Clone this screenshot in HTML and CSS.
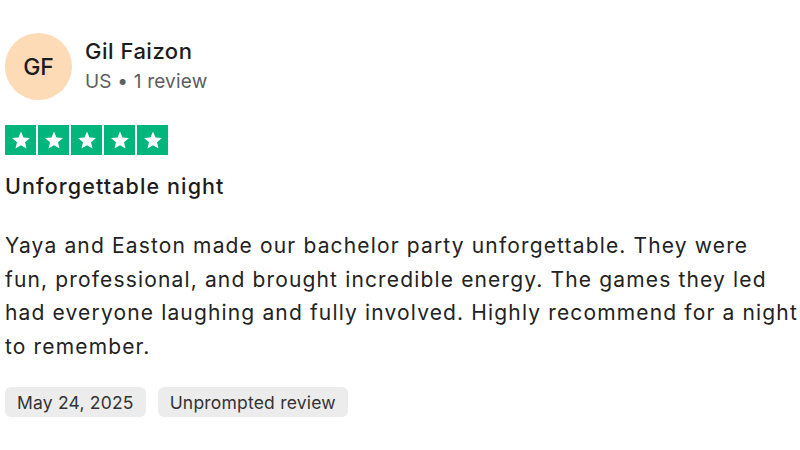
FILE: index.html
```html
<!DOCTYPE html>
<html>
<head>
<meta charset="utf-8">
<link rel="stylesheet" href="styles.css">
</head>
<body>
<div class="review">
  <div class="header">
    <div class="avatar">GF</div>
    <div class="who">
      <div class="name">Gil Faizon</div>
      <div class="meta">US • 1 review</div>
    </div>
  </div>
  <div class="stars">
    <span class="star"><svg viewBox="0 0 24 24"><path d="M12 3.5l2.47 6.06 6.53.48-5 4.22 1.56 6.36L12 17.16l-5.56 3.46L8 14.26 3 10.04l6.53-.48z" fill="#fff"/></svg></span>
    <span class="star"><svg viewBox="0 0 24 24"><path d="M12 3.5l2.47 6.06 6.53.48-5 4.22 1.56 6.36L12 17.16l-5.56 3.46L8 14.26 3 10.04l6.53-.48z" fill="#fff"/></svg></span>
    <span class="star"><svg viewBox="0 0 24 24"><path d="M12 3.5l2.47 6.06 6.53.48-5 4.22 1.56 6.36L12 17.16l-5.56 3.46L8 14.26 3 10.04l6.53-.48z" fill="#fff"/></svg></span>
    <span class="star"><svg viewBox="0 0 24 24"><path d="M12 3.5l2.47 6.06 6.53.48-5 4.22 1.56 6.36L12 17.16l-5.56 3.46L8 14.26 3 10.04l6.53-.48z" fill="#fff"/></svg></span>
    <span class="star"><svg viewBox="0 0 24 24"><path d="M12 3.5l2.47 6.06 6.53.48-5 4.22 1.56 6.36L12 17.16l-5.56 3.46L8 14.26 3 10.04l6.53-.48z" fill="#fff"/></svg></span>
  </div>
  <h2 class="title">Unforgettable night</h2>
  <p class="body">Yaya and Easton made our bachelor party unforgettable. They were<br>fun, professional, and brought incredible energy. The games they led had everyone laughing and fully involved. Highly recommend for a night to remember.</p>
  <div class="tags">
    <span class="tag">May 24, 2025</span>
    <span class="tag">Unprompted review</span>
  </div>
</div>
</body>
</html>
```
FILE: styles.css
```css
html, body {
  margin: 0;
  padding: 0;
  background: #ffffff;
}
body {
  font-family: Inter, "Noto Sans", sans-serif;
  color: #1c1c1c;
}
.review {
  padding: 33px 0 0 5px;
  width: 795px;
}
.header {
  display: flex;
  align-items: center;
  gap: 13px;
}
.avatar {
  width: 67px;
  height: 67px;
  border-radius: 50%;
  background: #fcdbb6;
  display: flex;
  align-items: center;
  justify-content: center;
  font-size: 23px;
  font-weight: 500;
  color: #1c1c1c;
}
.who {
  display: flex;
  flex-direction: column;
  gap: 7px;
  margin-top: -3px;
}
.name {
  font-size: 22px;
  font-weight: 500;
  line-height: 26px;
  letter-spacing: 0.5px;
}
.meta {
  font-size: 19px;
  line-height: 22px;
  color: #5e5e5e;
  letter-spacing: 0.2px;
}
.stars {
  display: flex;
  gap: 2px;
  margin-top: 25px;
}
.star {
  width: 31px;
  height: 30px;
  background: #00b67a;
  display: flex;
  align-items: center;
  justify-content: center;
}
.star svg {
  width: 24px;
  height: 24px;
}
.title {
  margin: 18px 0 0 0;
  font-size: 21.5px;
  font-weight: 500;
  line-height: 26px;
  letter-spacing: 1.1px;
}
.body {
  margin: 30px 0 0 0;
  width: 795px;
  font-size: 21px;
  line-height: 33.6px;
  letter-spacing: 1.15px;
  color: #222222;
}
.tags {
  display: flex;
  gap: 12px;
  margin-top: 24px;
}
.tag {
  background: #ececec;
  border-radius: 6px;
  padding: 0 12px;
  height: 30px;
  display: flex;
  align-items: center;
  font-size: 17.5px;
  letter-spacing: 0.2px;
  color: #333333;
}
```
